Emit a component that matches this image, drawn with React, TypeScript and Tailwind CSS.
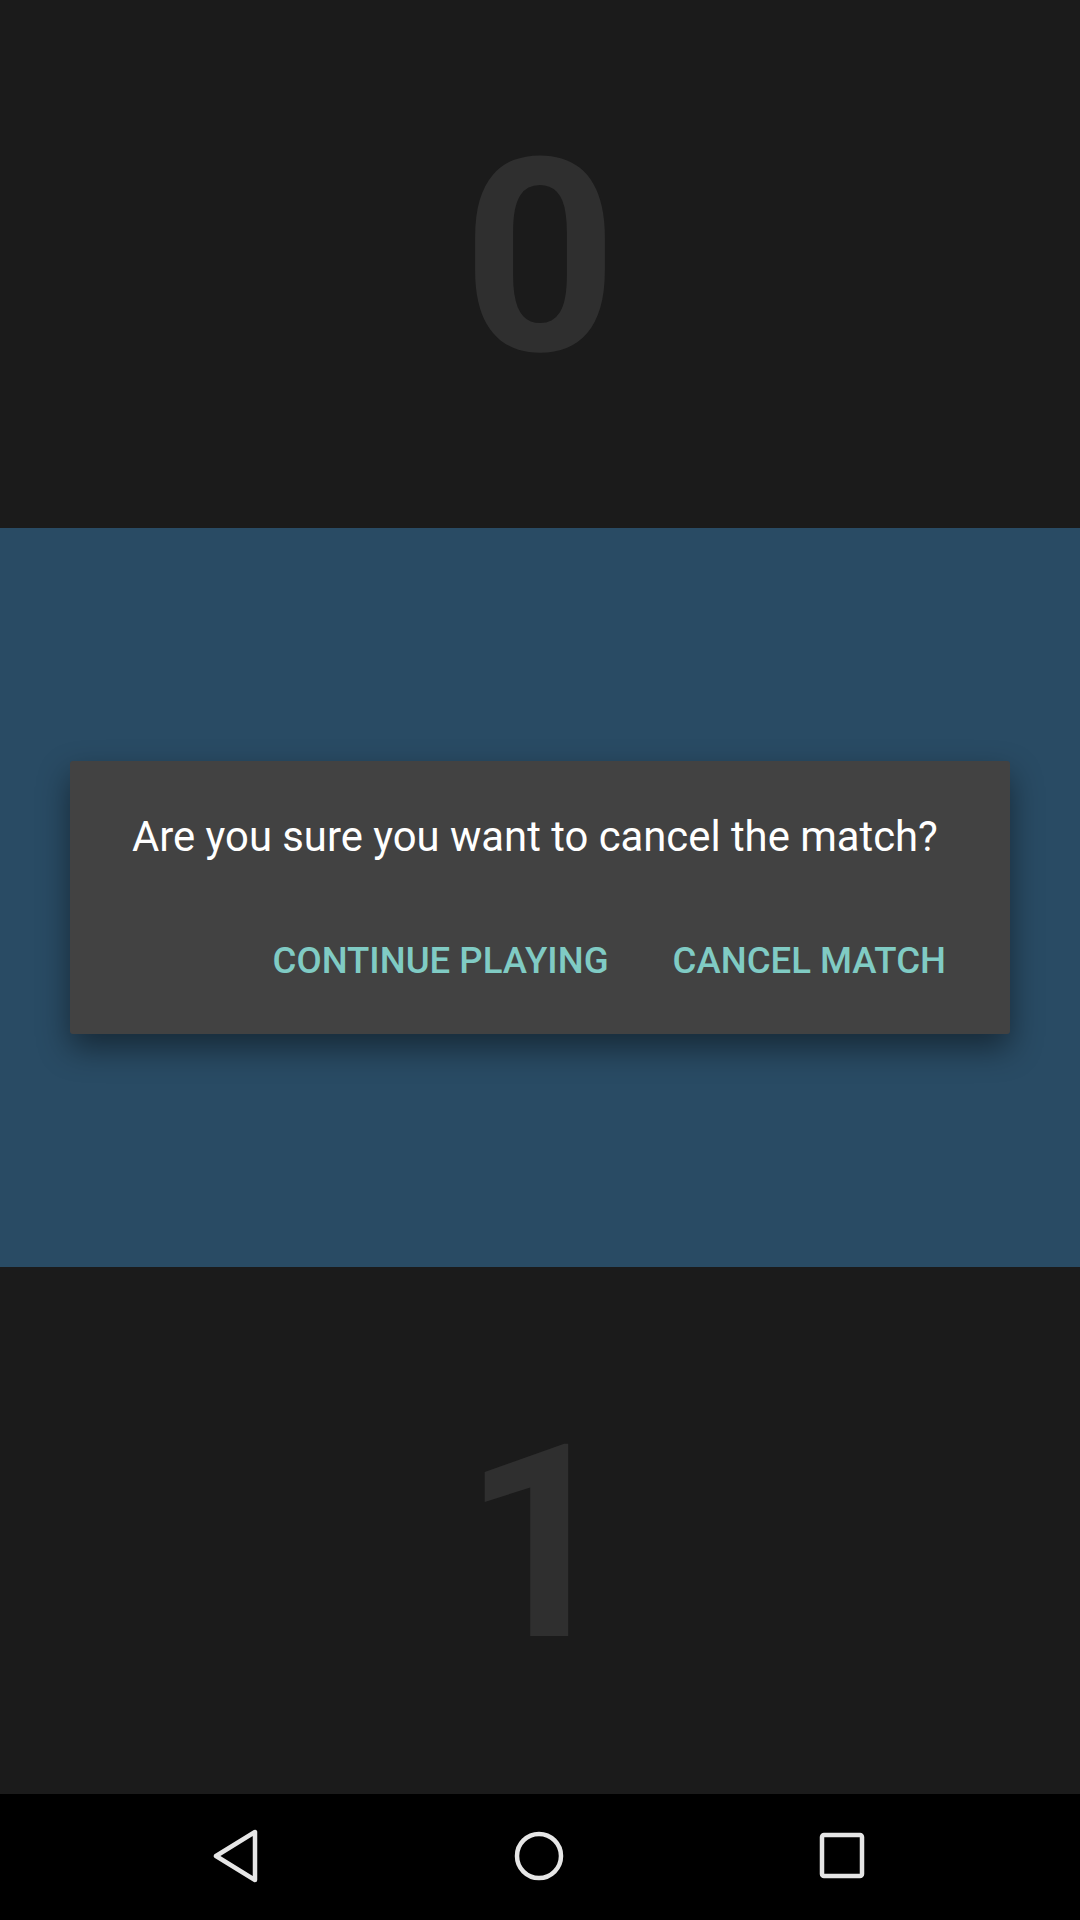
import React from "react";

const NavBar: React.FC = () => (
  <div className="h-[126px] bg-black flex items-center justify-between px-[213px] pb-[2px]">
    <svg width="46" height="54" viewBox="0 0 46 54">
      <path
        d="M42 3 L42 51 L3 27 Z"
        fill="none"
        stroke="#e6e6e6"
        strokeWidth="4.5"
        strokeLinejoin="round"
      />
    </svg>
    <svg width="52" height="52" viewBox="0 0 52 52">
      <circle cx="26" cy="26" r="22" fill="none" stroke="#e6e6e6" strokeWidth="4.5" />
    </svg>
    <svg width="48" height="48" viewBox="0 0 48 48">
      <rect x="3" y="3" width="40" height="41" rx="2" fill="none" stroke="#e6e6e6" strokeWidth="4.5" />
    </svg>
  </div>
);

const App: React.FC = () => {
  return (
    <div
      className="w-[1080px] h-[1920px] flex flex-col overflow-hidden"
      style={{ fontFamily: "Roboto, 'Noto Sans', sans-serif" }}
    >
      <div className="h-[528px] bg-[#1b1b1b] flex items-center justify-center pb-[12px]">
        <span className="text-[270px] font-bold leading-none text-[#2f2f2f]">0</span>
      </div>

      <div className="h-[739px] bg-[#294b64] flex items-center justify-center">
        <div className="w-[940px] h-[273px] bg-[#424242] rounded-[3px] shadow-[0_14px_32px_rgba(0,0,0,0.45)] flex flex-col">
          <p className="pl-[62px] pt-[48px] text-[41.8px] leading-[56px] text-white">
            Are you sure you want to cancel the match?
          </p>
          <div className="flex justify-end items-center gap-[64px] pr-[64px] mt-[78px]">
            <span className="text-[36.6px] font-medium leading-none text-[#80cbc4]">CONTINUE PLAYING</span>
            <span className="text-[36.6px] font-medium leading-none text-[#80cbc4]">CANCEL MATCH</span>
          </div>
        </div>
      </div>

      <div className="h-[527px] bg-[#1b1b1b] flex items-center justify-center pt-[26px]">
        <span className="text-[270px] font-bold leading-none text-[#2f2f2f]">1</span>
      </div>

      <NavBar />
    </div>
  );
};

export default App;
